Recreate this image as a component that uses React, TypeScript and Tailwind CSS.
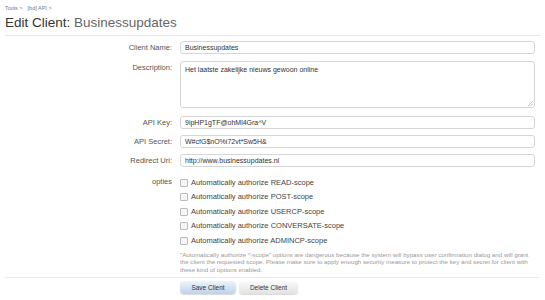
import React from 'react';

const scopes = ['READ', 'POST', 'USERCP', 'CONVERSATE', 'ADMINCP'];

function Row({ label, children, className = '' }: { label: string; children: React.ReactNode; className?: string }) {
  return (
    <div className={`flex items-start ${className}`}>
      <div className="w-[175px] shrink-0 pr-[3px] text-right text-[#555] leading-[13px]">{label}</div>
      <div className="ml-[5px] w-[355px]">{children}</div>
    </div>
  );
}

const field = 'h-[13px] rounded-[3px] border border-[#d6d6d6] px-[4px] text-[7px] leading-[11px] text-[#333]';

export default function App() {
  return (
    <div className="h-[300px] w-[545px] overflow-hidden bg-white font-['Liberation_Sans',Arial,sans-serif] text-[7.5px]">
      <div className="px-[5px] pt-[4px]">
        <div className="flex gap-[5px] text-[5.5px] text-[#6b7c8e]">
          <span>Tools &gt;</span>
          <span>[bd] API &gt;</span>
        </div>
        <h1 className="mt-[2px] text-[13.5px] leading-[18px] text-[#333]">
          Edit Client: <span className="text-[#666]">Businessupdates</span>
        </h1>
        <div className="mt-[3px] h-px w-[535px] bg-[#e8e8e8]" />
      </div>

      <div className="mt-[5px] flex flex-col">
        <Row label="Client Name:">
          <div className={field}>Businessupdates</div>
        </Row>
        <Row label="Description:" className="mt-[7px]">
          <div className="relative h-[47px] rounded-[3px] border border-[#d6d6d6] px-[4px] pt-[3px] text-[7px] leading-[9px] text-[#333]">
            Het laatste zakelijke nieuws gewoon online
            <svg className="absolute bottom-[1px] right-[1px]" width="5" height="5" viewBox="0 0 5 5">
              <path d="M5 0L0 5M5 2.5L2.5 5" stroke="#aaa" strokeWidth="0.7" />
            </svg>
          </div>
        </Row>
        <Row label="API Key:" className="mt-[8px]">
          <div className={field}>9ipHP1gTF@ohMl4Gra^V</div>
        </Row>
        <Row label="API Secret:" className="mt-[6px]">
          <div className={field}>W#cfG$nO%i72vt*Sw5H&amp;</div>
        </Row>
        <Row label="Redirect Uri:" className="mt-[6px]">
          <div className={field}>http://www.businessupdates.nl</div>
        </Row>

        <div className="mt-[8px] flex items-start">
          <div className="w-[175px] shrink-0 pr-[3px] text-right leading-[14.5px] text-[#555]">opties</div>
          <div className="ml-[5px] flex w-[355px] flex-col">
            {scopes.map((s) => (
              <label key={s} className="flex h-[14.5px] items-center gap-[3px] text-[#444]">
                <span className="h-[8px] w-[8px] rounded-[1px] border border-[#bbb] bg-[#f6f6f6]" />
                Automatically authorize {s}-scope
              </label>
            ))}
            <p className="mt-[3px] text-[6.2px] leading-[7.5px] text-[#999]">
              "Automatically authorize *-scope" options are dangerous because the system will bypass user confirmation dialog and will grant the client the requested scope. Please make sure to apply enough security measure to protect the key and secret for client with these kind of options enabled.
            </p>
          </div>
        </div>
      </div>

      <div className="ml-[5px] mt-[4px] h-px w-[535px] bg-[#dfeef8]" />

      <div className="ml-[180px] mt-[3px] flex gap-[3px]">
        <button className="h-[13px] w-[56px] rounded-[4px] bg-gradient-to-b from-[#eef4fa] to-[#bcd3e8] text-[6.5px] text-[#333] shadow-[0_1px_1px_rgba(0,0,0,0.15)]">
          Save Client
        </button>
        <button className="h-[13px] w-[59px] rounded-[4px] bg-gradient-to-b from-[#fbfbfb] to-[#e2e2e2] text-[6.5px] text-[#333] shadow-[0_1px_1px_rgba(0,0,0,0.15)]">
          Delete Client
        </button>
      </div>
    </div>
  );
}
